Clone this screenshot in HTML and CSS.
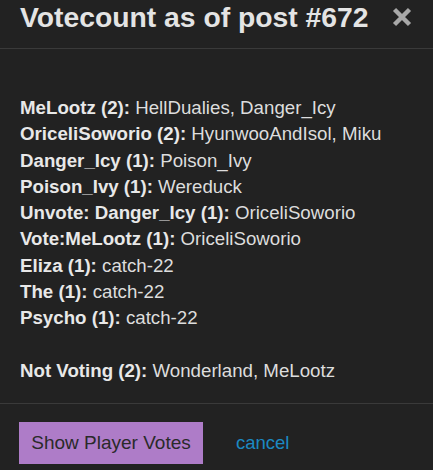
FILE: index.html
```html
<!DOCTYPE html>
<html>
<head>
<meta charset="utf-8">
<link rel="stylesheet" href="styles.css">
</head>
<body>
<div class="modal">
  <div class="header">
    <h2 class="title">Votecount as of post #672</h2>
    <span class="close"><svg width="20" height="20" viewBox="0 0 20 20"><path d="M2.5 2.5 L17.5 17.5 M17.5 2.5 L2.5 17.5" stroke="#a8a8a8" stroke-width="4.4" stroke-linecap="butt"/></svg></span>
  </div>
  <div class="body">
    <div class="line"><b>MeLootz (2):</b> HellDualies, Danger_Icy</div>
    <div class="line"><b>OriceliSoworio (2):</b> HyunwooAndIsol, Miku</div>
    <div class="line"><b>Danger_Icy (1):</b> Poison_Ivy</div>
    <div class="line"><b>Poison_Ivy (1):</b> Wereduck</div>
    <div class="line"><b>Unvote: Danger_Icy (1):</b> OriceliSoworio</div>
    <div class="line"><b>Vote:MeLootz (1):</b> OriceliSoworio</div>
    <div class="line"><b>Eliza (1):</b> catch-22</div>
    <div class="line"><b>The (1):</b> catch-22</div>
    <div class="line"><b>Psycho (1):</b> catch-22</div>
    <div class="line blank">&nbsp;</div>
    <div class="line"><b>Not Voting (2):</b> Wonderland, MeLootz</div>
  </div>
  <div class="footer">
    <button class="btn">Show Player Votes</button>
    <a class="cancel" href="#">cancel</a>
  </div>
</div>
</body>
</html>
```
FILE: styles.css
```css
html, body {
  margin: 0;
  padding: 0;
  background: #222222;
}
body {
  font-family: "Liberation Sans", Arial, sans-serif;
  color: #dddddd;
}
.modal {
  width: 433px;
}
.header {
  display: flex;
  align-items: flex-start;
  justify-content: space-between;
  height: 49px;
  padding: 0 21px 0 20px;
  box-sizing: border-box;
  border-bottom: 1px solid #3a3a3a;
}
.title {
  margin: 0;
  font-size: 28.3px;
  font-weight: bold;
  color: #e4e4e4;
  line-height: 34px;
}
.close {
  display: block;
  margin-top: 7px;
  height: 20px;
}
.close svg {
  display: block;
}
.body {
  padding: 46px 20px 19px 20px;
  font-size: 18.7px;
  line-height: 26.3px;
}
.line b {
  font-weight: bold;
  color: #e8e8e8;
}
.footer {
  border-top: 1px solid #3a3a3a;
  display: flex;
  align-items: center;
  padding: 18px 19px;
  gap: 33px;
}
.btn {
  background: #ae7cc8;
  border: none;
  color: #2a2a2a;
  font-family: "Liberation Sans", Arial, sans-serif;
  font-size: 19px;
  width: 184px;
  height: 42px;
  padding: 0;
}
.cancel {
  color: #1b8ac2;
  text-decoration: none;
  font-size: 18.5px;
}
```
